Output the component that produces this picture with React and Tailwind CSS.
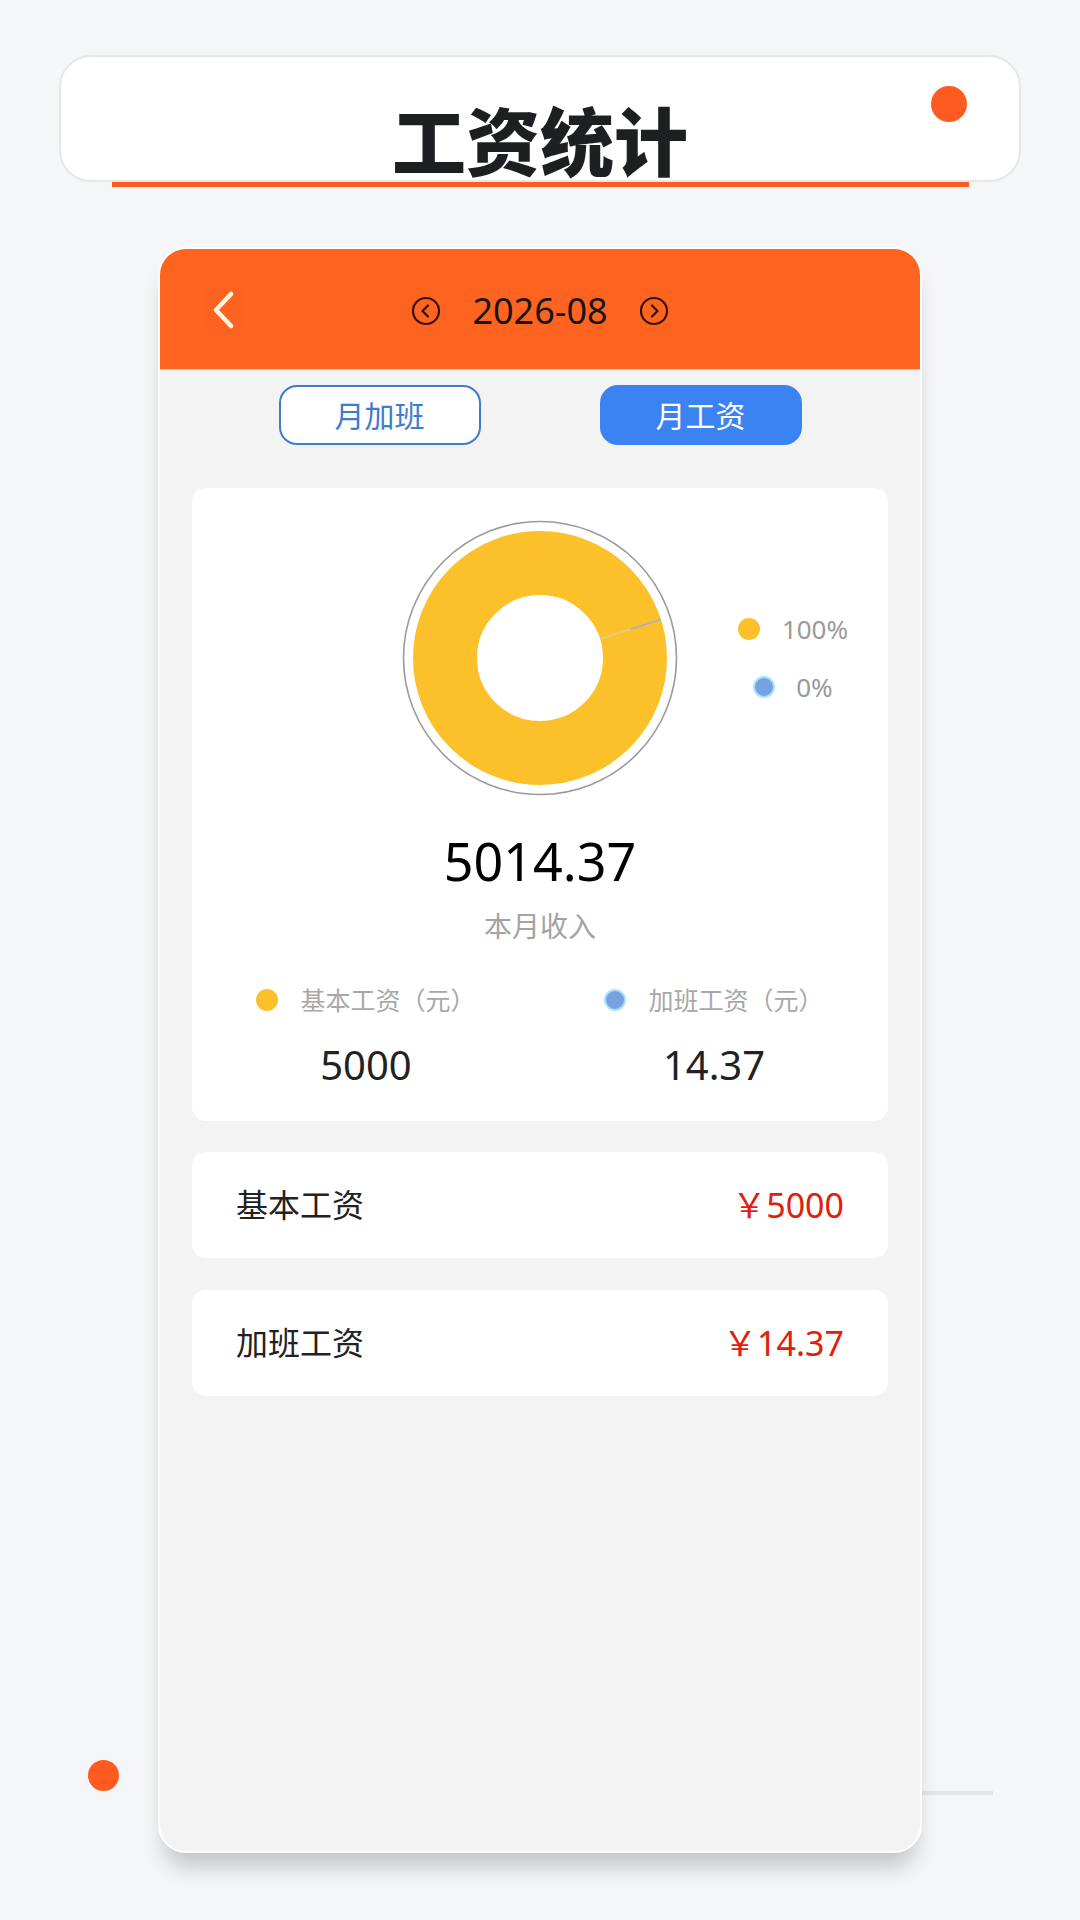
import React from 'react';

const font = { fontFamily: '"Noto Sans", "Noto Sans CJK SC", sans-serif' };

function CircleArrow({ dir }) {
  return (
    <svg width="30" height="30" viewBox="0 0 30 30" fill="none">
      <circle cx="15" cy="15" r="13" stroke="#331206" strokeWidth="2.2" />
      {dir === 'left' ? (
        <polyline points="17,9.5 11.5,15 17,20.5" stroke="#331206" strokeWidth="2.2" strokeLinecap="round" strokeLinejoin="round" />
      ) : (
        <polyline points="13,9.5 18.5,15 13,20.5" stroke="#331206" strokeWidth="2.2" strokeLinecap="round" strokeLinejoin="round" />
      )}
    </svg>
  );
}

function Donut() {
  const c = 138;
  const cos = Math.cos((17.6 * Math.PI) / 180);
  const sin = Math.sin((17.6 * Math.PI) / 180);
  return (
    <svg width="276" height="276" viewBox="0 0 276 276">
      <circle cx={c} cy={c} r="136.5" fill="none" stroke="#9a9a9a" strokeWidth="1.6" />
      <circle cx={c} cy={c} r="95" fill="none" stroke="#fcc02a" strokeWidth="64" />
      <line x1={c + 63 * cos} y1={c - 63 * sin} x2={c + 95 * cos} y2={c - 95 * sin} stroke="#dccb9c" strokeWidth="1.6" />
      <line x1={c + 95 * cos} y1={c - 95 * sin} x2={c + 127 * cos} y2={c - 127 * sin} stroke="#9fb0d2" strokeWidth="1.6" />
    </svg>
  );
}

function YellowDot() {
  return <span className="block w-[22px] h-[22px] rounded-full bg-[#fcc02a]" />;
}

function BlueDot() {
  return <span className="block w-[22px] h-[22px] rounded-full bg-[#76a2e2] border-2 border-[#a9e0fb]" />;
}

export default function App() {
  return (
    <div className="relative min-h-[1920px] w-full bg-[#f5f6f8] overflow-hidden" style={font}>
      {/* decorations */}
      <span className="absolute left-[88px] top-[1760px] w-[31px] h-[31px] rounded-full bg-[#ff5a1f]" />
      <span className="absolute left-[860px] top-[1791px] w-[133px] h-[4px] bg-[#e2e4e8]" />

      {/* title card */}
      <div className="pt-[55px] px-[59px]">
        <div className="relative h-[127px] rounded-[32px] border-2 border-[#e5e7eb] bg-white">
          <h1 className="pt-[48px] text-center text-[74px] leading-none font-extrabold text-[#1d1f22]">
            工资统计
          </h1>
          <span className="absolute right-[52px] top-[29px] w-[36px] h-[36px] rounded-full bg-[#ff5a1f]" />
          <span className="absolute left-[51px] right-[50px] -bottom-[7px] h-[5px] bg-[#ff5a1f]" />
        </div>
      </div>

      {/* phone */}
      <div className="relative mt-[65px] ml-[158px] w-[764px] h-[1606px] rounded-[28px] border-2 border-white bg-[#f3f3f3] overflow-hidden shadow-[0_20px_22px_-6px_rgba(0,0,0,0.2)] flex flex-col">
        {/* header */}
        <div className="relative h-[121px] bg-[#fe6420] border-b border-[#f7c9a0] flex items-center justify-center shrink-0">
          <button className="absolute left-[45px] top-[37px] w-[38px] h-[48px] flex items-center justify-center bg-[#fc6220]">
            <svg width="24" height="38" viewBox="0 0 24 38" fill="none">
              <polyline points="19,3 4,19 19,35" stroke="#fff6dc" strokeWidth="4.5" strokeLinecap="round" strokeLinejoin="round" />
            </svg>
          </button>
          <div className="flex items-center gap-[31px] pt-[4px]">
            <CircleArrow dir="left" />
            <span className="text-[36px] leading-none text-[#161616]">2026-08</span>
            <CircleArrow dir="right" />
          </div>
        </div>

        {/* body */}
        <div className="flex-1 px-[32px]">
          <div className="flex justify-center gap-[119px] pt-[15px]">
            <button className="w-[202px] h-[60px] rounded-[18px] border-2 border-[#3d7cd0] bg-white text-[30px] text-[#3d7cd0]">
              月加班
            </button>
            <button className="w-[202px] h-[60px] rounded-[18px] bg-[#3b82f2] text-[30px] text-white">
              月工资
            </button>
          </div>

          {/* chart card */}
          <div className="mt-[43px] h-[633px] rounded-[14px] bg-white pt-[32px]">
            <div className="grid grid-cols-[1fr_276px_1fr] items-center">
              <div />
              <Donut />
              <div className="flex flex-col items-center gap-[30px] pl-[20px]">
                <div className="flex items-center gap-[22px]">
                  <YellowDot />
                  <span className="text-[26px] leading-[28px] text-[#9a9a9a]">100%</span>
                </div>
                <div className="flex items-center gap-[21px]">
                  <BlueDot />
                  <span className="text-[26px] leading-[28px] text-[#9a9a9a]">0%</span>
                </div>
              </div>
            </div>

            <div className="mt-[39px] text-center text-[52px] leading-none text-black">5014.37</div>
            <div className="mt-[25px] text-center text-[28px] leading-[28px] text-[#a3a3a3]">本月收入</div>

            <div className="mt-[45px] grid grid-cols-2">
              <div className="flex flex-col items-center">
                <div className="flex items-center gap-[22px]">
                  <YellowDot />
                  <span className="text-[25px] leading-[30px] text-[#a8a8a8]">基本工资（元）</span>
                </div>
                <div className="mt-[30px] text-[40px] leading-none text-[#222]">5000</div>
              </div>
              <div className="flex flex-col items-center">
                <div className="flex items-center gap-[22px]">
                  <BlueDot />
                  <span className="text-[25px] leading-[30px] text-[#a8a8a8]">加班工资（元）</span>
                </div>
                <div className="mt-[30px] text-[40px] leading-none text-[#222]">14.37</div>
              </div>
            </div>
          </div>

          {/* rows */}
          <div className="mt-[31px] flex flex-col gap-[32px]">
            <div className="h-[106px] rounded-[14px] bg-white px-[44px] flex items-center justify-between">
              <span className="text-[32px] text-[#222]">基本工资</span>
              <span className="text-[34px] text-[#e0200c]">￥5000</span>
            </div>
            <div className="h-[106px] rounded-[14px] bg-white px-[44px] flex items-center justify-between">
              <span className="text-[32px] text-[#222]">加班工资</span>
              <span className="text-[34px] text-[#e0200c]">￥14.37</span>
            </div>
          </div>
        </div>
      </div>
    </div>
  );
}
